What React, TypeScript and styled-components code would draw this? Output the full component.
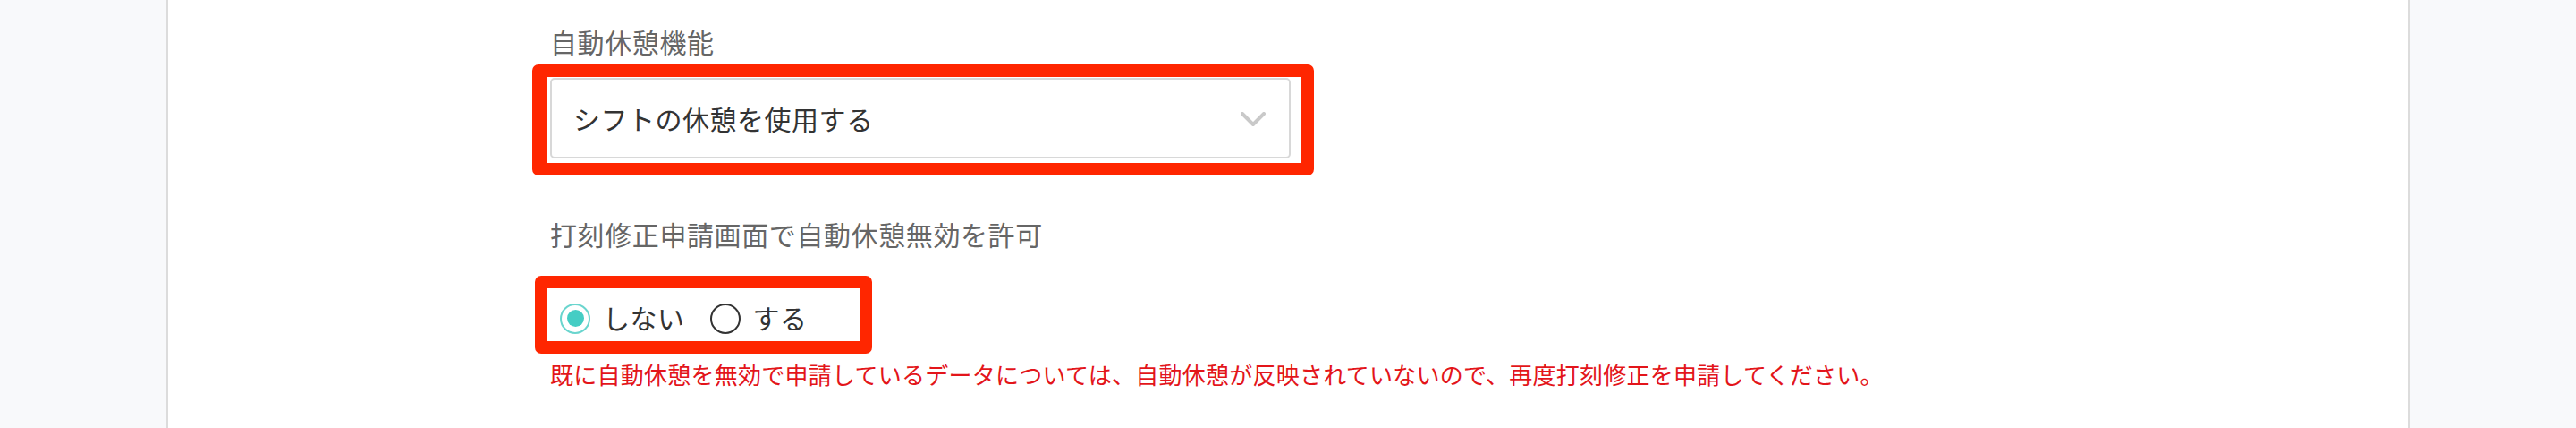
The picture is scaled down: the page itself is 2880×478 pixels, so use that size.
import React, { useState } from 'react';
import styled, { createGlobalStyle } from 'styled-components';

const GlobalStyle = createGlobalStyle`
  html, body {
    margin: 0;
    padding: 0;
    background: #f8f9fb;
  }
  body {
    font-family: "Noto Sans CJK JP", "Noto Sans", sans-serif;
  }
`;

const Page = styled.div`
  display: flex;
  justify-content: center;
  height: 478px;
  overflow: hidden;
  background: #f8f9fb;
`;

const Container = styled.main`
  flex: 0 0 2508px;
  height: 478px;
  box-sizing: border-box;
  background: #fff;
  border-left: 2px solid #dcdcdc;
  border-right: 2px solid #dcdcdc;
  padding: 26px 0 0 427px;
`;

const Field = styled.section<{ $gap?: number }>`
  display: flex;
  flex-direction: column;
  align-items: flex-start;
  margin-top: ${(p) => p.$gap ?? 0}px;
`;

const Label = styled.div`
  font-size: 30px;
  line-height: 40px;
  letter-spacing: 0.6px;
  color: #666;
`;

// red annotation frame around the highlighted control
const Highlight = styled.div<{ $shift: number; $top: number }>`
  margin-top: ${(p) => p.$top}px;
  margin-left: ${(p) => -p.$shift}px;
  border: 14px solid #ff2600;
  border-radius: 7px;
`;

const SelectFrame = styled(Highlight)`
  border-left-width: 16px;
  padding: 1px 12px 5px 4px;
`;

const SelectBox = styled.div`
  width: 774px;
  height: 86px;
  border: 2px solid #d8d8d8;
  border-radius: 5px;
  display: flex;
  align-items: center;
  justify-content: space-between;
  padding: 0 26px 0 24px;
  font-size: 30px;
  letter-spacing: 0.5px;
  color: #333;
  cursor: pointer;
`;

const Chevron = () => (
  <svg width="28" height="17" viewBox="0 0 28 17" style={{ marginTop: 2 }}>
    <path d="M2 2 L14 14 L26 2" fill="none" stroke="#c9c9c9" strokeWidth="4" strokeLinecap="round" strokeLinejoin="round" />
  </svg>
);

const RadioFrame = styled(Highlight)`
  width: 335px;
  height: 55px;
  display: flex;
  align-items: center;
  padding: 4px 0 0 14px;
  box-sizing: content-box;
`;

const RadioRow = styled.div`
  display: flex;
  align-items: center;
`;

const Option = styled.label`
  display: flex;
  align-items: center;
  margin-right: 28px;
  font-size: 30px;
  line-height: 40px;
  letter-spacing: 0.5px;
  color: #333;
  cursor: pointer;
`;

const Dot = styled.span<{ $on: boolean }>`
  width: 34px;
  height: 34px;
  border-radius: 50%;
  box-sizing: border-box;
  border: 2px solid ${(p) => (p.$on ? '#6ad5ce' : '#333')};
  display: flex;
  align-items: center;
  justify-content: center;
  margin-right: 14px;
  margin-top: 4px;

  &::after {
    content: '';
    width: 19px;
    height: 19px;
    border-radius: 50%;
    background: ${(p) => (p.$on ? '#45cdc4' : 'transparent')};
  }
`;

const Note = styled.p`
  margin: 6px 0 0;
  font-size: 26px;
  line-height: 34px;
  letter-spacing: 0.25px;
  color: #e3151a;
`;

export default function App() {
  const [allow, setAllow] = useState(false);

  return (
    <>
      <GlobalStyle />
      <Page>
        <Container>
          <Field>
            <Label>自動休憩機能</Label>
            <SelectFrame $shift={20} $top={6}>
              <SelectBox>
                <span>シフトの休憩を使用する</span>
                <Chevron />
              </SelectBox>
            </SelectFrame>
          </Field>

          <Field $gap={45}>
            <Label>打刻修正申請画面で自動休憩無効を許可</Label>
            <RadioFrame $shift={17} $top={27}>
              <RadioRow>
                <Option onClick={() => setAllow(false)}>
                  <Dot $on={!allow} />
                  しない
                </Option>
                <Option onClick={() => setAllow(true)}>
                  <Dot $on={allow} />
                  する
                </Option>
              </RadioRow>
            </RadioFrame>
            <Note>
              既に自動休憩を無効で申請しているデータについては、自動休憩が反映されていないので、再度打刻修正を申請してください。
            </Note>
          </Field>
        </Container>
      </Page>
    </>
  );
}
